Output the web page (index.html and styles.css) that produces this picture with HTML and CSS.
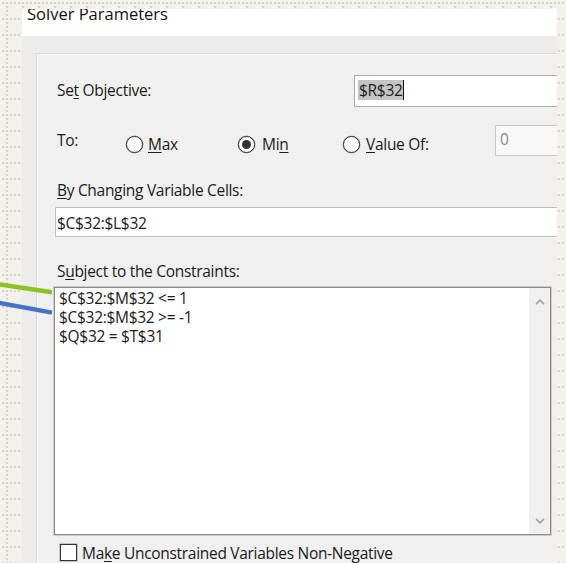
FILE: index.html
```html
<!DOCTYPE html>
<html lang="en">
<head>
<meta charset="utf-8">
<title>Solver Parameters</title>
<link rel="stylesheet" href="styles.css">
</head>
<body>
<div class="dialog">
  <div class="titlebar"><span class="title">Solver Parameters</span></div>
  <div class="client">
    <div class="group">
      <div class="row row-objective">
        <span class="label label-objective">Se<u>t</u> Objective:</span>
        <div class="field field-objective"><span class="sel">$R$32</span><span class="caret"></span></div>
      </div>

      <div class="row row-to">
        <span class="label label-to">To:</span>
        <span class="radio radio-max"><span class="radio-circle"></span><span><u>M</u>ax</span></span>
        <span class="radio radio-min"><span class="radio-circle checked"></span><span>Mi<u>n</u></span></span>
        <span class="radio radio-value"><span class="radio-circle"></span><span><u>V</u>alue Of:</span></span>
        <div class="field field-value">0</div>
      </div>

      <div class="label label-cells"><u>B</u>y Changing Variable Cells:</div>
      <div class="field field-cells">$C$32:$L$32</div>

      <div class="label label-subject">S<u>u</u>bject to the Constraints:</div>
      <div class="list">
        <div class="list-lines">
          <div>$C$32:$M$32 &lt;= 1</div>
          <div>$C$32:$M$32 &gt;= -1</div>
          <div>$Q$32 = $T$31</div>
        </div>
        <div class="scrollbar">
          <svg class="chevron" width="10" height="6" viewBox="0 0 10 6"><polyline points="1,5.2 5,1.2 9,5.2"/></svg>
          <svg class="chevron" width="10" height="6" viewBox="0 0 10 6"><polyline points="1,0.8 5,4.8 9,0.8"/></svg>
        </div>
      </div>

      <div class="check-row">
        <span class="check"></span>
        <span class="check-label">Ma<u>k</u>e Unconstrained Variables Non-Negative</span>
      </div>
    </div>
  </div>
</div>

<svg class="callouts" width="60" height="330" viewBox="0 0 60 330">
  <line x1="-4" y1="283.9" x2="52" y2="292.3" stroke="#8cc221" stroke-width="4.5"/>
  <line x1="-4" y1="302.3" x2="52" y2="312.6" stroke="#4472c4" stroke-width="4.5"/>
</svg>
</body>
</html>
```

FILE: styles.css
```css
* {
  box-sizing: border-box;
}

html,
body {
  margin: 0;
}

/* dotted grid paper behind the dialog */
body {
  position: relative;
  width: 566px;
  height: 563px;
  overflow: hidden;
  padding: 9px 0 0 22px;
  background-color: #f4f0ea;
  background-image:
    radial-gradient(circle at 1px 1px, #d5d1cb 1px, transparent 1.6px),
    radial-gradient(circle at 1px 1px, #d5d1cb 1px, transparent 1.6px);
  background-size: 4px 16px, 16px 4px;
  background-position: 2px 2px, 6px 2px;
  font-family: "Open Sans", "Noto Sans", sans-serif;
  font-size: 15.5px;
  letter-spacing: -0.3px;
  color: #1a1a1a;
}

u {
  text-decoration: underline;
  text-decoration-thickness: 1px;
  text-underline-offset: 2px;
}

.dialog {
  width: 535px;
  height: 554px;
  overflow: hidden;
  background: #ececec;
}

.titlebar {
  height: 27px;
  overflow: hidden;
  padding-left: 5px;
  background: #fff;
}

.title {
  display: block;
  margin-top: -3.5px;
  font-size: 16.5px;
  line-height: 16px;
  letter-spacing: 0;
  color: #111;
}

.client {
  height: 527px;
  padding: 17px 0 0 14px;
}

.group {
  height: 100%;
  padding: 21px 0 0 18px;
  border-top: 1px solid #d6d6d6;
  border-left: 1px solid #d6d6d6;
  background: #f0f0f0;
  box-shadow: inset 1px 1px 0 #fbfbfb;
}

.row {
  display: flex;
  align-items: flex-start;
}

.row > * {
  flex: none;
}

.label {
  padding-left: 2px;
  line-height: 20px;
  white-space: nowrap;
}

.field {
  background: #fff;
  border: 1px solid #b9b9b9;
  line-height: 20px;
  white-space: nowrap;
}

/* Set Objective */
.row-objective {
  height: 32px;
}

.label-objective {
  width: 299px;
  margin-top: 4.5px;
}

.field-objective {
  display: flex;
  width: 260px;
  height: 32px;
  padding: 4px 0 0 3px;
  border-color: #a9a9a9;
}

.sel {
  height: 20px;
  padding-left: 1px;
  background: #c4c4c4;
}

.caret {
  width: 1px;
  height: 20px;
  background: #111;
}

/* To: Max / Min / Value Of */
.row-to {
  height: 31px;
  margin-top: 18px;
}

.label-to {
  width: 71px;
  margin-top: 5px;
}

.radio {
  display: flex;
  gap: 6px;
  height: 20px;
  margin-top: 9px;
  line-height: 20px;
}

.radio-max {
  width: 112px;
  gap: 5px;
}

.radio-min {
  width: 105px;
  gap: 7px;
}

.radio-value {
  width: 152px;
}

.radio-circle {
  display: flex;
  flex: none;
  align-items: center;
  justify-content: center;
  width: 17px;
  height: 17px;
  margin-top: 2px;
  border: 1px solid #333;
  border-radius: 50%;
  background: #fff;
  box-shadow: 0 0 0 0.5px rgba(51, 51, 51, 0.45);
}

.radio-circle.checked::after {
  content: "";
  width: 9px;
  height: 9px;
  border-radius: 50%;
  background: #333;
}

.field-value {
  width: 80px;
  height: 31px;
  padding: 3px 0 0 4px;
  border-color: #c6c6c6;
  background: #f8f8f8;
  color: #8a8a8a;
}

/* By Changing Variable Cells */
.label-cells {
  margin-top: 24px;
}

.field-cells {
  width: 520px;
  height: 30px;
  margin-top: 7px;
  padding: 5px 0 0 1px;
  border-color: #bdbdbd;
}

/* Subject to the Constraints */
.label-subject {
  margin-top: 24px;
}

.list {
  display: flex;
  width: 497px;
  height: 248px;
  margin: 6px 0 0 -1px;
  border: 1px solid #8a8a8a;
  background: #fff;
  box-shadow: 0 0 0 1px rgba(130, 130, 130, 0.3);
}

.list-lines {
  flex: 1;
  padding: 1px 0 0 4px;
  line-height: 19px;
  white-space: nowrap;
}

.scrollbar {
  display: flex;
  flex: none;
  flex-direction: column;
  align-items: center;
  justify-content: space-between;
  width: 21px;
  padding: 11px 0 10px;
  background: #f0f0f0;
}

.chevron {
  display: block;
}

.chevron polyline {
  fill: none;
  stroke: #a6a6a6;
  stroke-width: 1.8;
}

/* Make Unconstrained Variables Non-Negative */
.check-row {
  display: flex;
  align-items: flex-start;
  gap: 5px;
  margin: 9px 0 0 5px;
}

.check {
  flex: none;
  width: 17px;
  height: 17px;
  border: 1px solid #333;
  background: #fff;
  box-shadow: 0 0 0 0.5px rgba(51, 51, 51, 0.45);
}

.check-label {
  margin-top: -1px;
  line-height: 20px;
  white-space: nowrap;
}

/* callout lines pointing at the constraint rows */
.callouts {
  position: absolute;
  left: 0;
  top: 0;
  overflow: visible;
  pointer-events: none;
}
```
